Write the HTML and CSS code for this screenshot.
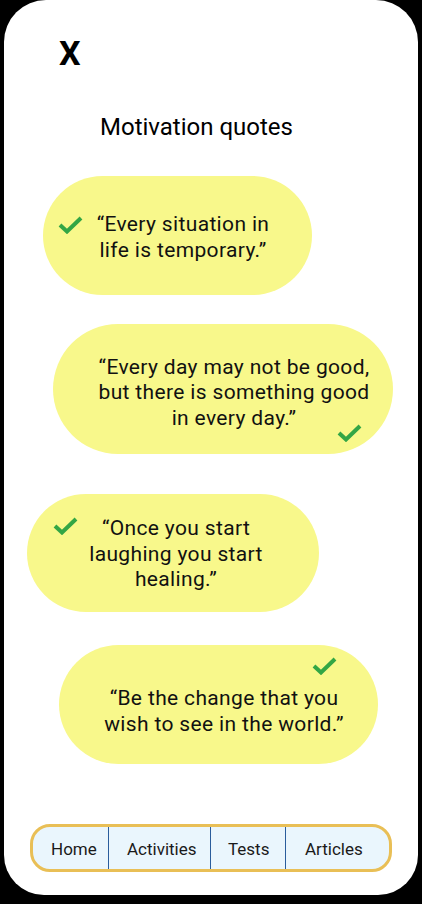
FILE: index.html
```html
<!DOCTYPE html>
<html lang="en">
<head>
<meta charset="utf-8">
<title>Motivation quotes</title>
<link rel="stylesheet" href="styles.css">
</head>
<body>
<div class="phone">
  <div class="close">X</div>
  <h1 class="title">Motivation quotes</h1>

  <div class="bubble b1">
    <svg class="check" viewBox="0 0 25 18"><polyline points="2,9 9,15.5 23,2"/></svg>
    <p class="quote">“Every situation in<br>life is temporary.”</p>
  </div>

  <div class="bubble b2">
    <p class="quote">“Every day may not be good,<br>but there is something good<br>in every day.”</p>
    <svg class="check" viewBox="0 0 25 18"><polyline points="2,9 9,15.5 23,2"/></svg>
  </div>

  <div class="bubble b3">
    <svg class="check" viewBox="0 0 25 18"><polyline points="2,9 9,15.5 23,2"/></svg>
    <p class="quote">“Once you start<br>laughing you start<br>healing.”</p>
  </div>

  <div class="bubble b4">
    <svg class="check" viewBox="0 0 25 18"><polyline points="2,9 9,15.5 23,2"/></svg>
    <p class="quote">“Be the change that you<br>wish to see in the world.”</p>
  </div>

  <nav class="nav">
    <a class="nav-item home">Home</a>
    <a class="nav-item activities">Activities</a>
    <a class="nav-item tests">Tests</a>
    <a class="nav-item last">Articles</a>
  </nav>
</div>
</body>
</html>
```

FILE: styles.css
```css
html, body {
  margin: 0;
  padding: 0;
  background: #000;
}
body {
  font-family: Roboto, "Liberation Sans", sans-serif;
  color: #111;
}
.phone {
  margin: 0 4px;
  height: 895px;
  background: #fff;
  border-radius: 42px 42px 40px 40px;
  display: flex;
  flex-direction: column;
  align-items: flex-start;
  padding-top: 33px;
  box-sizing: border-box;
}
.close {
  font-size: 34px;
  font-weight: 700;
  line-height: 40px;
  margin-left: 55px;
  color: #000;
}
.title {
  margin: 40px 0 0 96px;
  font-size: 24px;
  font-weight: 400;
  line-height: 28px;
  color: #000;
}
.bubble {
  position: relative;
  background: #f8f88b;
  border-radius: 999px;
  display: flex;
  align-items: center;
  justify-content: center;
  box-sizing: border-box;
}
.quote {
  margin: 0;
  font-size: 21px;
  letter-spacing: 0.35px;
  line-height: 25.5px;
  text-align: center;
  color: #111;
}
.check {
  position: absolute;
  width: 25px;
  height: 18px;
  fill: none;
  stroke: #33a645;
  stroke-width: 4;
}
.b1 { margin: 35px 0 0 39px; width: 269px; height: 119px; padding: 4px 0 0 11px; }
.b1 .check { left: 15px; top: 40px; }
.b2 { margin: 29px 0 0 49px; width: 340px; height: 130px; padding: 8px 0 0 22px; }
.b2 .check { left: 284px; top: 100px; }
.b3 { margin: 40px 0 0 23px; width: 292px; height: 118px; padding: 3px 0 0 6px; }
.b3 .check { left: 26px; top: 23px; }
.b4 { margin: 33px 0 0 55px; width: 319px; height: 119px; padding: 14px 0 0 11px; }
.b4 .check { left: 253px; top: 12px; }
.nav {
  margin: 60px 0 0 26px;
  width: 362px;
  height: 48px;
  box-sizing: border-box;
  border: 3px solid #e9bf56;
  border-radius: 20px;
  background: #eaf6fd;
  display: flex;
  overflow: hidden;
}
.nav-item {
  display: flex;
  align-items: center;
  box-sizing: border-box;
  padding: 1px 0 0 18px;
  font-size: 17px;
  color: #1a1a1a;
  border-right: 1px solid #2a5d9c;
}
.home { width: 76px; }
.activities { width: 102px; }
.tests { width: 75px; padding-left: 17px; }
.nav-item.last {
  border-right: none;
  flex: 1;
  padding-left: 19px;
}
```
